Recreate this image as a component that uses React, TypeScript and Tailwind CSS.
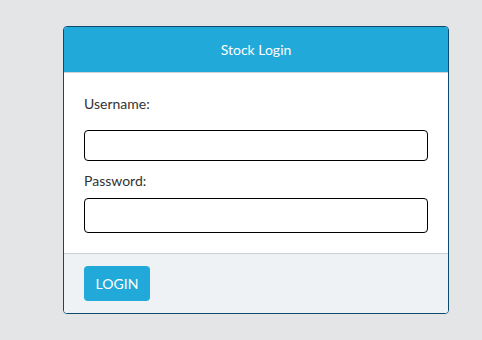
export default function App() {
  return (
    <div
      className="w-[482px] h-[340px] bg-[#e4e5e7] pt-[26px] pl-[63px]"
      style={{ fontFamily: 'Lato, "Open Sans", sans-serif' }}
    >
      <div className="w-[386px] h-[288px] border border-[#0e4a6e] rounded-[4px] overflow-hidden flex flex-col bg-white">
        <div className="h-[46px] bg-[#21a9d9] border-b border-[#cfd4d8] flex items-center justify-center text-white text-[14px]">
          Stock Login
        </div>
        <div className="flex-1 px-[20px] pt-[22px] flex flex-col">
          <label className="text-[14px] text-[#333] leading-[18px]">Username:</label>
          <input
            type="text"
            className="mt-[17px] h-[31px] w-full border border-black rounded-[4px] outline-none"
          />
          <label className="mt-[11px] text-[14px] text-[#333] leading-[18px]">Password:</label>
          <input
            type="password"
            className="mt-[8px] h-[35px] w-full border border-black rounded-[4px] outline-none"
          />
        </div>
        <div className="h-[60px] bg-[#eef2f5] border-t border-[#cbd0d4] px-[20px] pt-[12px]">
          <button className="w-[66px] h-[35px] bg-[#21a9d9] rounded-[4px] text-white text-[14px]">
            LOGIN
          </button>
        </div>
      </div>
    </div>
  );
}
